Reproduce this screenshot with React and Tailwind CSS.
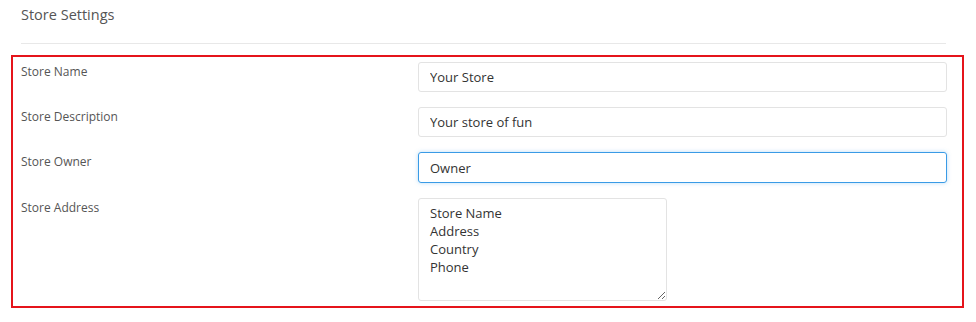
import { useState } from 'react';

const fields = [
  { label: 'Store Name', value: 'Your Store' },
  { label: 'Store Description', value: 'Your store of fun' },
  { label: 'Store Owner', value: 'Owner', focused: true },
];

function App() {
  const [values, setValues] = useState(fields.map((f) => f.value));
  const [address, setAddress] = useState('Store Name\nAddress\nCountry\nPhone');

  return (
    <div
      className="min-h-screen bg-white pl-[11px] pr-[12px] text-[#555]"
      style={{ fontFamily: '"Open Sans", "Liberation Sans", sans-serif' }}
    >
      {/* Header */}
      <div className="pl-[10px] pr-[18px]">
        <h2 className="pt-[5px] text-[14.5px] leading-[20px] font-normal text-[#555]">Store Settings</h2>
        <div className="mt-[18px] h-px bg-[#e8e8e8]"></div>
      </div>

      {/* Settings box */}
      <div className="mt-[11px] border-2 border-[#e5141b] pl-[8px] pr-[15px] pt-[5px] pb-[5px]">
        {fields.map((f, i) => (
          <div key={f.label} className="flex mb-[15px]">
            <label className="w-[397px] shrink-0 pt-[1px] text-[12px] leading-[17px] text-[#555]">
              {f.label}
            </label>
            <input
              type="text"
              value={values[i]}
              onChange={(e) => {
                const next = [...values];
                next[i] = e.target.value;
                setValues(next);
              }}
              className={
                f.focused
                  ? 'flex-1 h-[31px] rounded-[3px] border border-[#3a9be6] px-[11px] text-[13px] text-[#333] outline-none shadow-[0_0_4px_rgba(58,155,230,0.35)]'
                  : 'flex-1 h-[30px] rounded-[3px] border border-[#e3e3e3] px-[11px] text-[13px] text-[#333] outline-none'
              }
            />
          </div>
        ))}

        <div className="flex">
          <label className="w-[397px] shrink-0 pt-[1px] text-[12px] leading-[17px] text-[#555]">
            Store Address
          </label>
          <textarea
            value={address}
            onChange={(e) => setAddress(e.target.value)}
            className="w-[249px] h-[103px] rounded-[3px] border border-[#e3e3e3] px-[11px] pt-[5px] text-[13px] leading-[18px] text-[#333] outline-none"
          />
        </div>
      </div>
    </div>
  );
}

export default App;
